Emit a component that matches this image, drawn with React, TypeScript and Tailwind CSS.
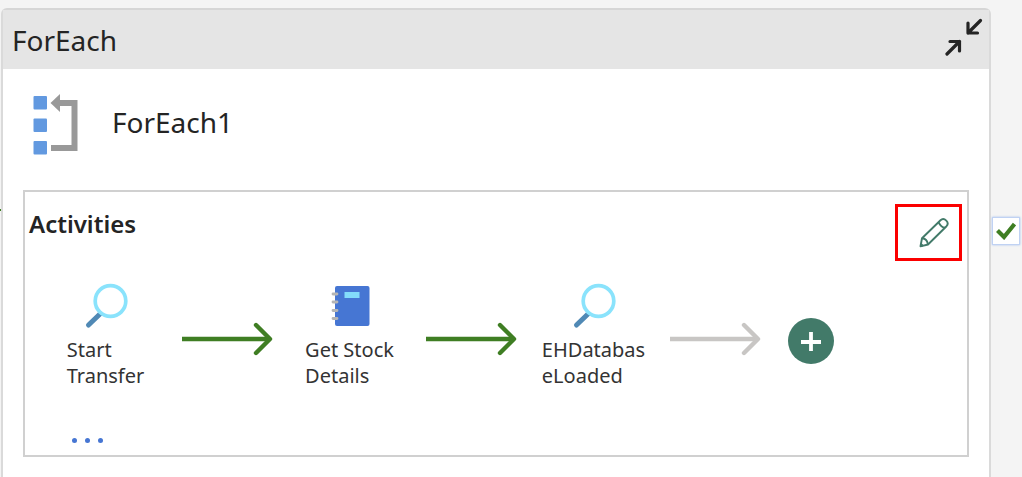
import type { ReactNode } from 'react';

function LoopIcon() {
  return (
    <svg width="48" height="62" viewBox="0 0 48 62" aria-hidden="true">
      <g fill="#6299e0">
        <rect x="1.500" y="3" width="13.500" height="13.500" rx="1" />
        <rect x="1.500" y="25.500" width="13.500" height="13.500" rx="1" />
        <rect x="1.500" y="48" width="13.500" height="13.500" rx="1" />
      </g>
      <path d="M24 10H42.500V55H19" fill="none" stroke="#999" strokeWidth="6" />
      <path d="M18.500 10L28 1V19Z" fill="#999" />
    </svg>
  );
}

function CollapseIcon() {
  return (
    <svg
      width="40"
      height="40"
      viewBox="0 0 40 40"
      fill="none"
      stroke="#242424"
      strokeWidth="3.200"
      strokeLinecap="round"
      strokeLinejoin="round"
      aria-hidden="true"
    >
      <path d="M35.500 4.500L23 17M23 7V17H32.500" />
      <path d="M2 38L14.500 25.500M5 25.500H14.500V35" />
    </svg>
  );
}

function PencilIcon() {
  return (
    <svg
      width="30"
      height="30"
      viewBox="0 0 30 30"
      fill="none"
      stroke="#427a69"
      strokeWidth="1.900"
      strokeLinejoin="round"
      aria-hidden="true"
    >
      <path d="M1.500 28.300L3 20.300L21.500 2.300C23 .900 25.500 .900 27.300 2.600C29 4.300 29 6.500 27.500 8.200L9 26.500Z" />
      <path d="M19.500 4.200C21.500 8 23.500 9.500 26 9.800M3 20.300C6 20.500 8.500 23 9 26.500M2 26L4 28" />
    </svg>
  );
}

function SearchIcon() {
  return (
    <svg width="44" height="46" viewBox="0 0 44 46" aria-hidden="true">
      <path d="M4.500 42L16.500 30.500" stroke="#5089b5" strokeWidth="5" strokeLinecap="round" />
      <circle cx="26.500" cy="18" r="15.300" fill="#fff" stroke="#8ae3fc" strokeWidth="3.700" />
    </svg>
  );
}

function NotebookIcon() {
  return (
    <svg width="40" height="44" viewBox="0 0 40 44" aria-hidden="true">
      <rect x="5" y="3" width="34.500" height="40" rx="2" fill="#4676d3" />
      <rect x="14.500" y="9" width="15" height="6" fill="#83dcfa" />
      <path
        d="M3 11H7M3 19H7M3 27.500H7M3 35.500H7"
        stroke="#b5b5b5"
        strokeWidth="2.800"
        strokeLinecap="round"
      />
    </svg>
  );
}

function Arrow({ color }: { color: string }) {
  return (
    <svg
      className="mt-[39px] shrink-0"
      width="91"
      height="34"
      viewBox="0 0 91 34"
      fill="none"
      stroke={color}
      aria-hidden="true"
    >
      <path d="M0 17H87" strokeWidth="4.600" />
      <path d="M74 3L88 17L74 31" strokeWidth="4.400" strokeLinecap="round" strokeLinejoin="round" />
    </svg>
  );
}

function Activity({ icon, name }: { icon: ReactNode; name: string }) {
  return (
    <li className="flex w-[105px] shrink-0 flex-col items-center">
      <span className="flex h-[54px] items-start">{icon}</span>
      <span className="text-[20px] leading-[26px] whitespace-pre text-[#333]">{name}</span>
    </li>
  );
}

export default function App() {
  return (
    <main className="relative flex min-h-screen bg-[#f4f4f4] pt-2 pl-px font-['Noto_Sans','Open_Sans',sans-serif] text-[#242424]">
      <span className="absolute top-[209px] left-0 h-0.5 w-px bg-[#3f7e23]" />
      <section className="min-w-0 flex-1 rounded-t-md border-2 border-b-0 border-[#d6d6d6] border-r-[#dadada] border-l-[#dadada] bg-white">
        <header className="flex h-[59px] items-center justify-between bg-[#e5e5e5] pr-1 pl-[9px]">
          <h1 className="text-[28px] leading-9">ForEach</h1>
          <button type="button" aria-label="Collapse" className="mb-2">
            <CollapseIcon />
          </button>
        </header>

        <div className="flex items-center gap-8 px-[29px] pt-6 pb-[35px]">
          <LoopIcon />
          <h2 className="mb-1 text-[28px] leading-9">ForEach1</h2>
        </div>

        <section className="mr-5 ml-5 border-2 border-[#d0d0d0] pb-[3px]">
          <div className="flex items-start justify-between pt-3 pr-[5px] pl-1">
            <h3 className="pt-1 text-2xl leading-8 font-semibold">Activities</h3>
            <button
              type="button"
              aria-label="Edit activities"
              className="flex h-[57px] w-[67px] items-center justify-end border-[3px] border-[#fb0000] pr-2.5"
            >
              <PencilIcon />
            </button>
          </div>

          <ul className="flex items-start gap-6 pt-[22px] pl-7">
            <Activity icon={<SearchIcon />} name={'Start\nTransfer'} />
            <Arrow color="#3f7e23" />
            <Activity icon={<NotebookIcon />} name={'Get Stock\nDetails'} />
            <Arrow color="#3f7e23" />
            <Activity icon={<SearchIcon />} name={'EHDatabas\neLoaded'} />
            <Arrow color="#c8c6c4" />
            <li className="pt-[35px] pl-[3px]">
              <button
                type="button"
                aria-label="Add activity"
                className="flex size-[46px] items-center justify-center rounded-full bg-[#427a69]"
              >
                <svg width="20" height="20" viewBox="0 0 20 20" stroke="#fff" strokeWidth="3.800" aria-hidden="true">
                  <path d="M0 11H20M10 1V20" />
                </svg>
              </button>
            </li>
          </ul>

          <button type="button" aria-label="More activities" className="mt-[39px] ml-[45px] flex h-6 items-center gap-2 px-0.5">
            <span className="size-[5px] rounded-full bg-[#4676d3]" />
            <span className="size-[5px] rounded-full bg-[#4676d3]" />
            <span className="size-[5px] rounded-full bg-[#4676d3]" />
          </button>
        </section>
      </section>

      <aside className="w-[31px] shrink-0 pt-[209px] pl-px">
        <span
          role="img"
          aria-label="On success"
          className="flex size-7 items-center justify-center border border-[#c0d2f3] bg-white shadow-[0_0_2px_#a9c2ef]"
        >
          <svg width="20" height="18" viewBox="0 0 20 18" fill="none" stroke="#3f7e23" strokeWidth="4.200" aria-hidden="true">
            <path d="M1.500 8.500L8 15L18.500 2" />
          </svg>
        </span>
      </aside>
    </main>
  );
}
